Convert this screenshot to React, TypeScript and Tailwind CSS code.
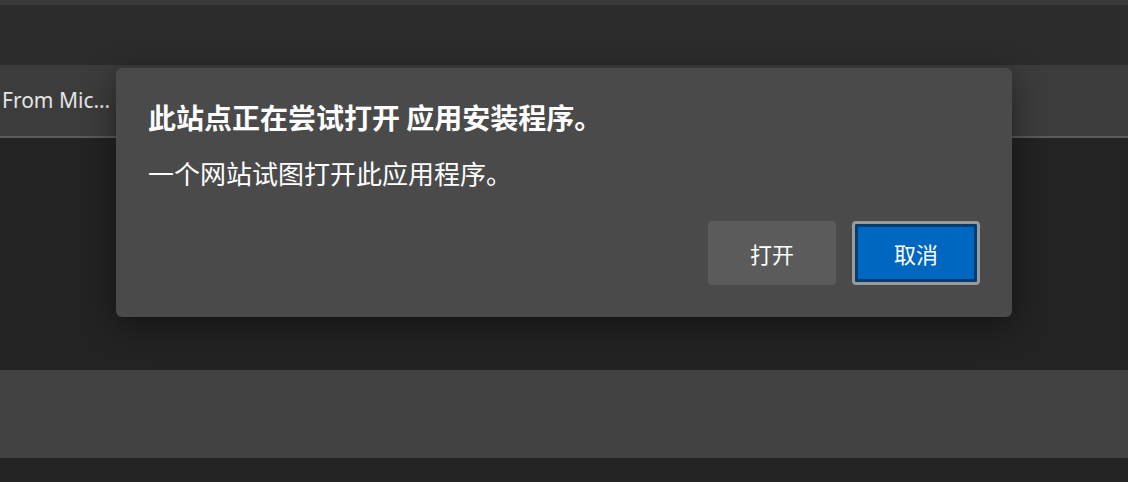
import React from "react"

const App: React.FC = () => {
  return (
    <main className="relative w-[1128px] h-[482px] overflow-hidden bg-[#232323] font-['Noto_Sans','Noto_Sans_CJK_SC',sans-serif]">
      {/* Browser chrome behind the prompt */}
      <div className="h-[5px] bg-[#3a3a3a]" />
      <div className="h-[60px] bg-[#2c2c2c]" />
      <div className="h-[73px] bg-[#3c3c3c] border-b-2 border-[#5a5a5a] flex items-center">
        <span className="ml-[2px] w-[116px] truncate text-[21px] text-[#e4e4e4]">From Microsoft Store</span>
      </div>
      <div className="h-[232px]" />
      <div className="h-[88px] bg-[#414141]" />

      {/* Protocol prompt */}
      <section className="absolute left-[116px] top-[68px] w-[896px] h-[249px] rounded-[6px] bg-[#4a4a4a] shadow-[0_8px_32px_rgba(0,0,0,0.45)] px-8 pt-[31px] flex flex-col font-['Noto_Sans_CJK_SC',sans-serif] text-white">
        <h1 className="text-[28px] leading-[36px] font-bold">此站点正在尝试打开 应用安装程序。</h1>
        <p className="mt-[21px] text-[26px] leading-[34px]">一个网站试图打开此应用程序。</p>
        <div className="mt-[31px] flex justify-end gap-4">
          <button className="w-[128px] h-[64px] rounded-[4px] bg-[#5b5b5b] text-[22px] text-white">打开</button>
          <button className="w-[128px] h-[64px] rounded-[4px] border-[3px] border-[#9a9a9a] bg-[#0067c0] shadow-[inset_0_0_0_3px_#003d73] text-[22px] text-white">取消</button>
        </div>
      </section>
    </main>
  )
}

export default App
